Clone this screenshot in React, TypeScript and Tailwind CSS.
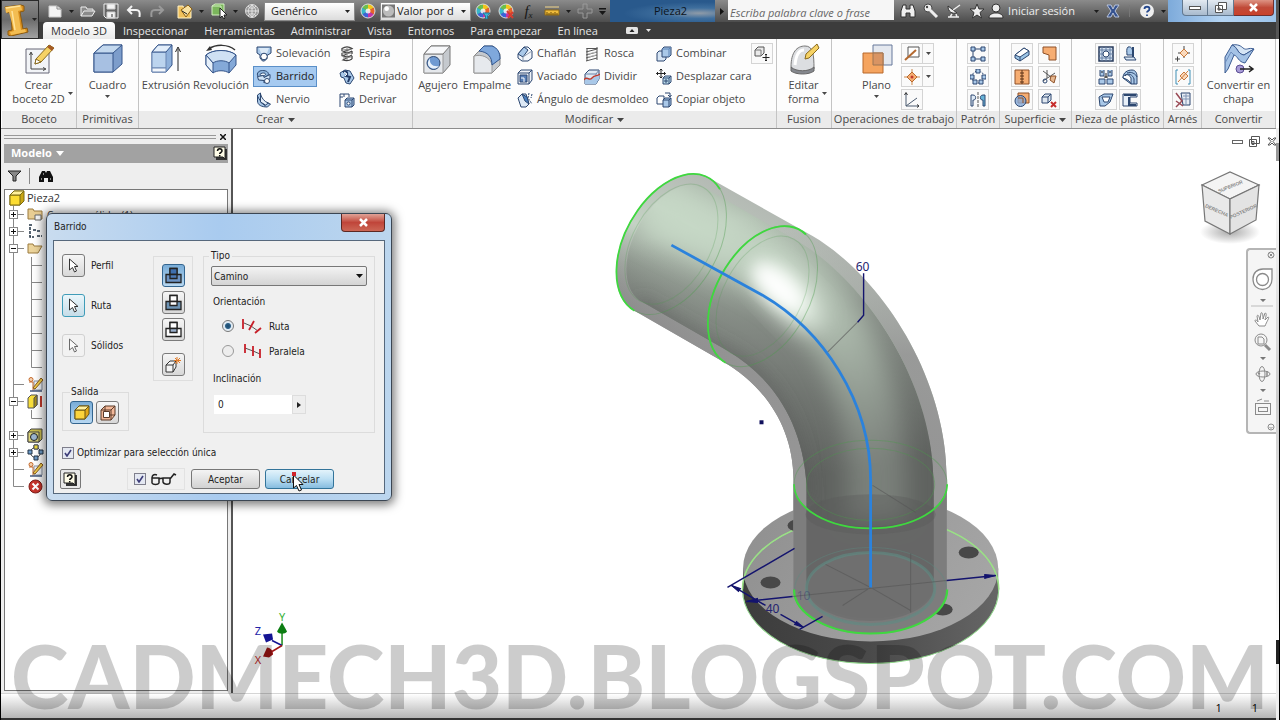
import type { ReactNode } from "react";

const O = "#f6ad72";
const B = "#a9c8e8";
const N = "#2c4770";

function Svg({ size = 16, box = 16, children, className = "" }: { size?: number; box?: number; children: ReactNode; className?: string }) {
  return (
    <svg width={size} height={size} viewBox={`0 0 ${box} ${box}`} fill="none" stroke={N} strokeWidth={1} className={`shrink-0 ${className}`} aria-hidden="true">
      {children}
    </svg>
  );
}

const icons: Record<string, ReactNode> = {
  solevacion: (<><path d="M1 1h14v6l-4 2.500v3L8.500 15h-2L4 12V9L1 7z" fill={B} /><path d="M3 2h10l-2 5H5z" fill="#dbe9f7" stroke="none" /><circle cx="8" cy="10.500" r="3.300" fill="#fff" /></>),
  barrido: (<><path d="M2 7.500C0 4 3 1.500 6.500 1.500c4 0 7 2 5.500 5l-4 2" fill="#8fb6de" /><path d="M4 5.500c1-2 6-2 5.500 0-.5 1.500-5 2-5.500 0z" fill="#eef5fc" /><path d="M1.500 7.500l6-1 .5 2 6-3v4l-6 4.500v-2.500l-5.500-.5z" fill="#cfe2f5" /><circle cx="11" cy="12" r="2.500" fill="#fff" /></>),
  nervio: (<><path d="M1.500 3l3-2v8c1 2 4 3 7 2l3 1-3 3c-6 0-10-2-10-6z" fill={B} /><path d="M4.500 1v9l5 4M1.500 4c2 4 4 7 8 9" fill="none" /><path d="M4.500 2c1 4 4 8 8 9l-3 2-5-3z" fill="#e6f0fa" /></>),
  espira: (<><path d="M3 2.500c3-2 7-2 10 0L4 6c3 1 6 1 9-1L4 10c3 1 6 1 9-1L4 14c3 1 6 1 9-1M3 2v3M13 5v3M3 7v3M13 10v3" stroke="#444" strokeWidth="1.300" /><path d="M4 4l8-1M4 8l8-1M4 12l8-1M8 2v12" stroke="#888" /></>),
  repujado: (<><path d="M1 4l5-3 5 1 4 7-4 6-4-1-2-5-3-1z" fill={B} /><path d="M4 3c5-2 5 2 3 4l4 1-2 5" fill="none" stroke="#223a66" strokeWidth="2" /><path d="M5 3l3 2-2 2" stroke="#fff" /></>),
  derivar: (<><path d="M1 15V2h9v3M5 2v3M1 5h3" /><path d="M6 8l2-2h7v7l-2 2H6z" fill={B} /><path d="M6 8h7v7M13 8l2-2" /><circle cx="9.500" cy="11.500" r="1.600" fill="#fff" /></>),
  chaflan: (<><path d="M1 8l6-7h4l4 4v7l-4 3H5L1 12z" fill="#f3f6fa" /><path d="M1 8l6-7 4 3-5 7z" fill={B} /><path d="M6 11l9-6M6 11v4" stroke="#8c9bb0" /></>),
  vaciado: (<><path d="M1 4l3-3h11v10l-3 4H1z" fill="#eef2f7" /><path d="M1 4h11v11M12 4l3-3" /><path d="M3 6h7v7H3z" fill="#587fb6" /><path d="M4 9h3v4" stroke="#fff" /></>),
  angulo: (<><path d="M1 6l4-4h4l3 10-3 3H4z" fill="#dce8f5" /><path d="M5 2l5 3 2 7-4-3z" fill="#4a80c0" /><path d="M12 1l-1 5 4 6M15 2l-1 4" strokeDasharray="2 1" /></>),
  rosca: (<><path d="M2.500 2.500h11M2 6l11-3M2 9l11-3M2 12l11-3M2 15l11-3M3 2v13M13 1v13" stroke="#555" /><path d="M4 8l8-2M4 11l8-2" stroke="#bbb" /></>),
  dividir: (<><path d="M1 5l4-4h10v9l-3 5H1z" fill="#dfe9f4" /><path d="M1 5h11v10M12 5l3-4" stroke="#6d86ab" /><path d="M1 10c3-4 5 2 8-1s4-1 6-4v5l-3 5H1z" fill={B} stroke="none" /><path d="M0 11c3-5 5 2 8-2s5-1 8-4" stroke="#c0392b" strokeWidth="1.300" /></>),
  combinar: (<><path d="M1 7l2-2h7v8l-2 2H1z" fill="#d7e5f4" /><path d="M6 3l2-2h7v8l-2 2H6z" fill={B} /><path d="M6 3h7v8M13 3l2-2" stroke="#5c83b5" /></>),
  desplazar: (<><path d="M5 0v9M0.500 4.500h9M3.500 1.500L5 0l1.500 1.500M3.500 7.500L5 9l1.500-1.500M2 3L.5 4.500 2 6M8 3l1.500 1.500L8 6" stroke="#222" /><path d="M7 9l2-2h6v6l-2 2H7z" fill="#bfe0ee" /><path d="M7 9h6v6M13 9l2-2M9 11h2v2H9z" /></>),
  copiar: (<><path d="M1 6l2-2h5v8H1z" fill="#fff" /><path d="M7 8l2-2h6v7l-2 2H7z" fill={B} /><path d="M7 8h6v7M13 8l2-2M9 1h5v3M12 3l2 2 1.500-2" /></>),
  reemplazar: (<><path d="M1 4l3-3h6v6l-3 3H1z" fill="#e9e9e9" stroke="#555" /><path d="M1 4h6v6" stroke="#777" /><path d="M12 8v7M8.500 11.500h7M11 9l1-1 1 1M11 14l1 1 1-1" stroke="#222" /></>),
  eje: (<><path d="M4 1h11v10H4z" stroke="#555" fill="#fff" /><path d="M1 14L12 4" stroke="#b46a31" strokeWidth="2" /></>),
  punto: (<><path d="M8 0v16M0 8h16" stroke="#c9874e" /><path d="M8 3l5 5-5 5-5-5z" fill={O} stroke="#b86a2d" /><circle cx="8" cy="8" r="1.500" fill="#c0392b" stroke="none" /></>),
  scu: (<><path d="M2 1v13h13M2 14l11-8" stroke="#4d5c70" /><path d="M.5 3L2 .5 3.500 3M13 12.500l2 1.500-2 1.500" stroke="#333" /></>),
  rect: (<><path d="M3 3h10M3 3v10M3 13h10" /><path d="M1 1h4v4H1zM11 1h4v4h-4zM1 11h4v4H1zM11 11h4v4h-4z" fill={B} /></>),
  circular: (<><circle cx="8" cy="8" r="6" strokeDasharray="2 1.500" /><path d="M6 0h4v4H6zM0 6h4v4H0zM12 6h4v4h-4zM9 11h4v4H9zM3 11h4v4H3z" fill={B} /></>),
  simetria: (<><path d="M8 0v16" stroke="#555" strokeDasharray="3 1" /><path d="M1 3h2c4 0 3 6 0 5v6H1z" fill="#dfeaf5" /><path d="M15 3h-2c-4 0-3 6 0 5v6h2z" fill="#67b3d7" /></>),
  engrosar: (<><path d="M1 9l9-7 5 3v4l-9 6-5-3z" fill="#9cc5e6" /><path d="M1 9l9-7 5 3-9 6z" fill="#fff" /><path d="M6 11v4" /></>),
  parche: (<path d="M2 1h13v13h-7V9L2 7z" fill={O} stroke="#8e5128" />),
  coser: (<><path d="M1 1h14v14H1z" fill={O} stroke="#8e5128" /><path d="M8 1v14M6 4h4M6 7h4M6 10h4M6 13h4" stroke="#5c3317" /></>),
  recortar: (<><path d="M2 2l12 9M2 12L14 4M6 1v8" stroke="#555" /><path d="M10 7h5l-2 7-4-3z" fill="#e6b78f" stroke="#8e5128" /><circle cx="4" cy="12" r="2" /></>),
  esculpir: (<><path d="M4 1h11v10H4z" fill={O} stroke="#8e5128" /><circle cx="6.500" cy="9" r="5.500" fill="#84a9d8" fillOpacity=".8" /><path d="M4 6h5v5" stroke="#8e5128" /></>),
  borrar: (<><path d="M1 5l3-3h6v6l-3 3H1z" fill="#dfe7f0" /><path d="M1 5h6v6M7 5l3-3" /><path d="M10 10l5 5M15 10l-5 5" stroke="#c62d2d" strokeWidth="2" /></>),
  rejilla: (<><path d="M1 1h14v14H1z" fill="#d5e2f1" stroke="#26395a" strokeWidth="1.500" /><path d="M1 4h14M1 12h14M4 1v14M12 1v14M1 8h14M8 1v14" stroke="#6780a5" /><circle cx="8" cy="8" r="3" fill="#fff" /></>),
  resalte: (<><path d="M6 1c4-1 5 3 5 8H5C5 6 4 3 6 1z" fill={B} /><path d="M2 11h10l2 3H4z" fill="#dbe8f5" /><path d="M11 1v10" strokeWidth="2" /></>),
  reborde: (<><path d="M2 1v6h4V1M10 1v6h4V1M1 10h6v5H1zM9 10h6v5H9z" fill={B} /><path d="M3 3h2M11 3h2M6 8h4M8 4v5" stroke="#222" /></>),
  apoyo: (<><path d="M1 9c0-6 5-8 9-8s5 4 5 6v8H9z" fill={B} /><path d="M1 9c0-4 6-5 8 0v6c-1-3-4-5-8-6z" fill="#fff" /><path d="M3 7c3-4 8-1 9 3v5M5 4c4-2 9 1 10 4" /></>),
  ajuste: (<><path d="M1 5l5-3h9l-3 8-5 4H2z" fill={B} /><path d="M4 5h8l-2 5H6z" fill="#fff" /></>),
  labio: (<><path d="M1 2h14v3H8v6h7v3H1z" fill="#e8f0f9" /><path d="M2 3h12M14 13H7V5" strokeWidth="2" /></>),
  arnes1: (<><path d="M3 7h12M9 0v12M0 13h5M2.500 10.500v5" stroke="#444" /><path d="M9 3l4 4-4 4-4-4z" fill="#fad9bc" stroke="#c97a3c" /></>),
  arnes2: (<><path d="M3 1H1v14h2M13 1h2v14h-2" stroke="#3f8fb5" /><path d="M9 3l4 4-4 4-4-4zM3 13L13 2" fill="#fad9bc" stroke="#c97a3c" /></>),
  arnes3: (<><path d="M6 1h9v12H8z" fill="#e8edf4" /><path d="M8 4h6M8 7h6M11 2v10" stroke="#8195b5" /><path d="M1 1l6 8-6 6M1 9l7 5" stroke="#9a4a55" strokeWidth="1.500" /></>),
};

const bigIcons: Record<string, ReactNode> = {
  boceto: (<><path d="M3 6h23v24H3z" fill="#f2f4f7" stroke="#667" /><path d="M8 10v16h14M6.500 12L8 9l1.500 3M20 24.500l3 1.500-3 1.500" stroke="#444" /><path d="M12 21l1-5L26 2l5 3-13 14z" fill="#f6d265" stroke="#8a6a1c" /><path d="M12 21l1-5 5 3z" fill="#fff" stroke="#8a6a1c" /><path d="M24 4l5 4 2-3-4-3z" fill="#a65b25" stroke="none" /></>),
  cuadro: (<><path d="M2 10l9-8h19v19l-9 8H2z" fill="#7d9dcb" stroke="#35558a" /><path d="M2 10h19v19H2z" fill="#a7c0e2" stroke="#35558a" /><path d="M2 10l9-8h19l-9 8z" fill="#c3d8ee" stroke="#35558a" /></>),
  extrusion: (<><path d="M2 9l6-7h14v20l-6 7H2z" fill="#8eb0da" stroke="#35558a" /><path d="M2 9h14v16H2z" fill="#bcd4ee" stroke="#6a86b3" /><path d="M2 25h14v4H2z" fill="#f2f6fb" stroke="#6a86b3" /><path d="M2 9l6-7h14l-6 7z" fill="#e3eefa" stroke="#35558a" /><path d="M28 28V6M25.500 9L28 4l2.500 5" stroke="#222" /></>),
  revolucion: (<><path d="M1 12c7-6 23-6 30 0v10l-7 8c-4-3-12-3-16 0l-7-8z" fill="#84a9d8" stroke="#35558a" /><path d="M1 12c7-6 23-6 30 0l-7 8c-4-3-12-3-16 0z" fill="#cfe1f4" stroke="#35558a" /><path d="M1 12l7 8v10l-7-8z" fill="#e6f0fa" stroke="#35558a" /><path d="M24 20v10" stroke="#35558a" /><path d="M4 6c7-5 19-5 26 1" stroke="#333" strokeWidth="1.500" /><path d="M1 8l4-5 2 4z" fill="#333" stroke="none" /></>),
  agujero: (<><path d="M2 11l7-8h19v19l-7 8H2z" fill="#c5c9ce" stroke="#777" /><path d="M2 11h19v19H2z" fill="#e5e8ec" stroke="#999" /><path d="M2 11l7-8h19l-7 8z" fill="#f7f8fa" stroke="#777" /><circle cx="11.500" cy="20" r="6.500" fill="#6f9ad2" stroke="#2c4770" /><path d="M8 15c-1 6 3 9 9 8-4 5-12 2-11-4z" fill="#e9f2fb" stroke="none" /></>),
  empalme: (<><path d="M3 13L13 3h9l7 8v11l-8 8H3z" fill="#c4c8cd" stroke="#888" /><path d="M3 13c8-2 15 1 18 8v9H3z" fill="#e6e9ed" stroke="#999" /><path d="M13 3h8c6 2 8 7 8 13l-8 6c0-8-4-13-13-14z" fill="#7fa8dc" stroke="#2f558e" /></>),
  forma: (<><path d="M3 24C3 9 9 3 17 3s9 8 9 23c-6 5-18 5-23-2z" fill="#dcdee1" stroke="#777" /><path d="M7 22C8 11 11 7 16 7" stroke="#fff" strokeWidth="3" /><path d="M3 24c5 5 18 5 23 0v4c-5 4-18 4-23 0z" fill="#85888e" stroke="#666" /><path d="M17 16l1-5L29 1l2 4-10 10z" fill="#f6d265" stroke="#8a6a1c" /></>),
  plano: (<><path d="M12 2h19v20H12z" fill="#e4e8ef" stroke="#66799b" /><path d="M2 10h20v20H2z" fill="#f5a45f" stroke="#b8692d" /><path d="M12 10h10v12H12z" fill="#d99463" stroke="#9c7455" /></>),
  chapa: (<><path d="M9 2c6 2 5 9 12 10l10-6c-6-2-7 2-11-1-2-2-5-4-11-3z" fill="#d6e5f5" stroke="#3c5c92" /><path d="M9 2c6 2 5 9 12 10l10-6-9 14c-7-1-7-7-11-8L5 26l-3 4V14z" fill="#a5c3e6" stroke="#3c5c92" /><path d="M11 12L8 9 2 20" stroke="#6d8dbd" /><circle cx="17" cy="26" r="4" fill="#a79bd6" stroke="#5b4e94" /><path d="M17 26h12M26 23l4 3-4 3" stroke="#222" strokeWidth="1.500" /></>),
};

function Down({ className = "" }: { className?: string }) {
  return (
    <svg width="5" height="3" viewBox="0 0 5 3" className={`shrink-0 ${className}`} aria-hidden="true"><path d="M0 0h5L2.500 3z" fill="currentColor" /></svg>
  );
}

function Big({ icon, lines, caret, side, className }: { icon: string; lines: string[]; caret?: boolean; side?: boolean; className: string }) {
  return (
    <button type="button" className={`flex shrink-0 flex-col items-center leading-[14px] whitespace-nowrap ${className}`}>
      <Svg size={32} box={32} className="mb-[3px]">{bigIcons[icon]}</Svg>
      <span>{lines[0]}</span>
      {lines[1] && (
        <span className="relative">
          {lines[1]}
          {side && <Down className="absolute top-0 -right-2" />}
        </span>
      )}
      {caret && <Down className="mt-[3px]" />}
    </button>
  );
}

function Tool({ icon, label, active, className = "" }: { icon: string; label: string; active?: boolean; className?: string }) {
  return (
    <button type="button" className={`flex h-[21px] items-center gap-1 justify-self-start border px-0.5 whitespace-nowrap ${active ? "border-[#5a8fc8] bg-[#a6caf0] text-[#222]" : "border-transparent"} ${className}`}>
      <Svg>{icons[icon]}</Svg>
      {label}
    </button>
  );
}

function Mini({ icon, caret, title }: { icon: string; caret?: boolean; title: string }) {
  return (
    <button type="button" aria-label={title} className="flex h-[21px] items-center border border-[#d4d4d4] bg-[#fafafa]">
      <span className="grid w-5 place-items-center"><Svg>{icons[icon]}</Svg></span>
      {caret && <span className="grid h-full w-[11px] place-items-center border-l border-[#d4d4d4]"><Down /></span>}
    </button>
  );
}

function Panel({ title, caret, className, children }: { title: string; caret?: boolean; className: string; children: ReactNode }) {
  return (
    <section className={`flex shrink-0 flex-col border-r border-[#c4c4c4] ${className}`}>
      <div className="flex h-[72px] items-start pt-1">{children}</div>
      <h2 className="flex h-[17px] items-center justify-center gap-1 bg-[#ebebeb] whitespace-nowrap">
        {title}
        {caret && <svg width="7" height="4" viewBox="0 0 7 4" aria-hidden="true"><path d="M0 0h7L3.500 4z" fill="#444" /></svg>}
      </h2>
    </section>
  );
}

function Qat({ label, children }: { label: string; children: ReactNode }) {
  return (
    <button type="button" aria-label={label} className="grid h-[22px] w-[23px] shrink-0 place-items-center">
      <Svg>{children}</Svg>
    </button>
  );
}

function BarCaret({ className = "w-2.5" }: { className?: string }) {
  return <span className={`grid shrink-0 place-items-center text-[#1c1c1c] ${className}`}><Down /></span>;
}

function Wheel() {
  return (
    <g stroke="none">
      <path d="M8 8V1a7 7 0 0 1 6 3.500z" fill="#f3c51d" /><path d="M8 8l6-3.500a7 7 0 0 1 0 7z" fill="#e8632b" />
      <path d="M8 8l6 3.500A7 7 0 0 1 8 15z" fill="#c234a8" /><path d="M8 8v7a7 7 0 0 1-6-3.500z" fill="#3b62d8" />
      <path d="M8 8l-6 3.500a7 7 0 0 1 0-7z" fill="#38b6c9" /><path d="M8 8L2 4.500A7 7 0 0 1 8 1z" fill="#6cc04a" />
      <circle cx="8" cy="8" r="2.500" fill="#fff" fillOpacity=".8" /><circle cx="8" cy="8" r="7" fill="none" stroke="#ddd" />
    </g>
  );
}

function BarSelect({ label, value, swatch }: { label: string; value: string; swatch?: boolean }) {
  return (
    <div className="relative h-[19px] w-[91px] shrink-0 border border-[#8a8a8a] bg-gradient-to-b from-white to-[#dcdcdc] text-[#222]">
      <select aria-label={label} className={`h-full w-full appearance-none outline-none ${swatch ? "pl-4" : "pl-1.5"}`}>
        <option>{value}</option>
      </select>
      {swatch && (
        <svg width="13" height="14" viewBox="0 0 14 14" className="pointer-events-none absolute top-px left-px" aria-hidden="true">
          <rect width="14" height="14" fill="#777" /><circle cx="7" cy="7" r="6" fill="#bbb" /><circle cx="5" cy="4.500" r="2.500" fill="#fff" />
        </svg>
      )}
      <Down className="pointer-events-none absolute top-[7px] right-1" />
    </div>
  );
}

function TitleBar() {
  return (
    <div className="flex h-[22px] items-center bg-gradient-to-b from-[#8b8b8b] to-[#4d4d4d] pl-1">
      <Qat label="Nuevo"><path d="M2 3h8l4 3v8H2z" fill="#f4f4f4" stroke="#ccc" /><path d="M10 3v3h4" stroke="#888" /></Qat>
      <BarCaret />
      <Qat label="Abrir"><path d="M1 13V4h5l1 2h6v2M1 13l3-5h11l-3 5z" fill="#8a8a8a" stroke="#eee" /></Qat>
      <Qat label="Guardar"><path d="M1 1h14v14H3l-2-2z" fill="#666" stroke="#eee" /><path d="M4 1h8v5H4zM4 9h8v6H4z" fill="#f2f2f2" stroke="#ccc" /><path d="M9 11v3" stroke="#333" /></Qat>
      <Qat label="Deshacer"><path d="M6 3L2 7l4 4M2.500 7H10c4 0 4 3 3.500 7" stroke="#f2f2f2" strokeWidth="2" /></Qat>
      <Qat label="Rehacer"><path d="M10 3l4 4-4 4M13.500 7H6c-4 0-4 3-3.500 7" stroke="#999" strokeWidth="2" /></Qat>
      <span className="w-[5px] shrink-0" />
      <Qat label="Proyectos"><path d="M1 3h5l1 2h7v10H1z" fill="#f0c15c" stroke="#fff1c5" /><path d="M4 7l7-5 4 4-6 8z" fill="#f8e1a1" stroke="#8b5e12" /><path d="M5 8l5 3" stroke="#222" /></Qat>
      <BarCaret className="w-[11px]" />
      <Qat label="Seleccionar"><path d="M1 3h9v9H1zM1 3l3-2h9v9l-3 2" fill="#7bb65c" stroke="#d4f0c2" /><path d="M9 5v10l2-2 2 3 1-1-1-3h3z" fill="#fff" stroke="#222" /></Qat>
      <BarCaret />
      <Qat label="Material"><circle cx="8" cy="8" r="6.500" fill="#999" stroke="#ddd" /><path d="M2 8h12M8 2v12M4 3c2 3 6 3 8 0M4 13c2-3 6-3 8 0M8 2c-5 4-5 8 0 12M8 2c5 4 5 8 0 12" stroke="#e2e2e2" /></Qat>
      <span className="w-px shrink-0" />
      <BarSelect label="Material" value="Genérico" />
      <span className="w-px shrink-0" />
      <Qat label="Aspecto"><Wheel /></Qat>
      <span className="w-px shrink-0" />
      <BarSelect label="Aspecto" value="Valor por d" swatch />
      <Qat label="Ajustar"><Wheel /><path d="M8 10h7l-2.500 3v3h-2v-3z" fill="#3fb5d6" stroke="#1d7c99" /></Qat>
      <Qat label="Borrar aspecto"><Wheel /><path d="M9 8l6 7M15 9l-5 6" stroke="#d63c2e" strokeWidth="2" /></Qat>
      <button type="button" aria-label="Parámetros" className="h-[22px] w-[23px] shrink-0 font-['Liberation_Serif',serif] text-[15px] leading-none italic text-[#161616]">f<sub className="text-[9px]">x</sub></button>
      <Qat label="Medir"><path d="M1 7h14v5H1z" fill="#f0bd3c" stroke="#8f6814" /><path d="M3 9v3M5 10v2M7 9v3M9 10v2M11 9v3M13 10v2" stroke="#6e4c06" /><path d="M1 4h14" stroke="#f3d88f" /></Qat>
      <BarCaret />
      <Qat label="Añadir"><path d="M6 1h4v5h5v4h-5v5H6v-5H1V6h5z" stroke="#999" /></Qat>
      <span className="grid w-3 shrink-0 place-items-center"><svg width="7" height="7" viewBox="0 0 7 7" aria-hidden="true"><path d="M0 0h7v1.500H0zM0 3h7L3.500 7z" fill="#161616" /></svg></span>
      <div className="ml-0.5 grid h-[22px] w-[105px] shrink-0 place-items-center bg-[radial-gradient(ellipse_at_85%_60%,#8f9ba8_0%,#3f6f9e_28%,#29598c_60%)] pl-4 text-[#0c1420]">Pieza2</div>
      <span className="grid w-[13px] shrink-0 place-items-center"><svg width="4" height="7" viewBox="0 0 4 7" aria-hidden="true"><path d="M0 0l4 3.500L0 7z" fill="#111" /></svg></span>
      <input aria-label="Buscar" placeholder="Escriba palabra clave o frase" className="h-5 min-w-0 flex-1 self-start bg-[#f6f6f6] px-0.5 pt-1 text-[11px] italic outline-none placeholder:text-[#666]" />
      <div className="flex shrink-0 items-center pl-0.5 text-[#eee]">
        <Qat label="Buscar ahora"><path d="M3 2h3v4h4V2h3l2 6v6h-5v-4H6v4H1V8z" fill="#efefef" stroke="#333" /></Qat>
        <Qat label="Suscripción"><circle cx="5" cy="5" r="4" fill="#eee" stroke="#444" /><path d="M7 7l7 7" stroke="#eee" strokeWidth="3" /><circle cx="4" cy="4" r="1.200" fill="#444" stroke="none" /></Qat>
        <Qat label="Comunicación"><path d="M2 3c0 6 4 8 9 7z" fill="#eee" stroke="#333" /><path d="M7 7l7-5M2 14h11M6 11l-2 3h7l-1-3" stroke="#eee" strokeWidth="1.500" /></Qat>
        <Qat label="Favoritos"><path d="M8 1l2 5h5l-4 3.500 1.500 5.500L8 12l-4.500 3L5 9.500 1 6h5z" fill="#eee" stroke="#333" /></Qat>
        <button type="button" className="flex h-[22px] items-center gap-1 whitespace-nowrap">
          <Svg><circle cx="8" cy="5" r="4" fill="#eee" stroke="#333" /><path d="M1 15c0-4 3-4 5-5h4c2 1 5 1 5 5z" fill="#eee" stroke="#333" /></Svg>
          Iniciar sesión
        </button>
        <span className="w-4 shrink-0" />
        <BarCaret />
        <Qat label="Exchange"><path d="M2 2h4l2 4 2-4h4l-4 6 4 6h-4L8 10l-2 4H2l4-6z" fill="#35528f" stroke="#b8c4dd" /></Qat>
        <span className="mx-[5px] h-3 w-px bg-[#777]" />
        <Qat label="Ayuda"><circle cx="8" cy="8" r="7" fill="#eee" stroke="none" /><path d="M5.500 6c0-3 5-3 5 0 0 2-2.500 2-2.500 3.500M8 11.500v1.500" stroke="#24478c" strokeWidth="1.800" /></Qat>
        <BarCaret />
      </div>
      <div className="flex h-full w-[108px] shrink-0 items-start justify-end bg-gradient-to-r from-[#7daada] via-[#b4d4f3] to-[#9cc3ea] pr-0.5 text-[#444]">
        <button type="button" aria-label="Minimizar" className="grid h-4 w-[26px] place-items-center rounded-bl border border-t-0 border-[#62788f] bg-gradient-to-b from-[#e3eaf2] to-[#a8bacd]"><span className="h-1 w-3 border border-[#555] bg-white" /></button>
        <button type="button" aria-label="Restaurar" className="grid h-4 w-[26px] place-items-center border border-t-0 border-l-0 border-[#62788f] bg-gradient-to-b from-[#e3eaf2] to-[#a8bacd]"><svg width="12" height="11" viewBox="0 0 12 11" fill="#fff" stroke="#555" aria-hidden="true"><path d="M3.500.5h8v7h-8zM.5 3.500h7v7h-7zM3 6h2v2H3z" /></svg></button>
        <button type="button" aria-label="Cerrar" className="grid h-4 w-10 place-items-center rounded-br border border-t-0 border-l-0 border-[#6d3030] bg-gradient-to-b from-[#dd9384] via-[#c04a39] to-[#c9412a]"><svg width="11" height="9" viewBox="0 0 11 9" stroke="#fff" strokeWidth="2.500" aria-hidden="true"><path d="M2 1l7 7M9 1L2 8" /></svg></button>
      </div>
    </div>
  );
}

function Header() {
  const tabs = ["Inspeccionar", "Herramientas", "Administrar", "Vista", "Entornos", "Para empezar", "En línea"];
  return (
    <header className="flex h-[39px]">
      <button type="button" aria-label="Menú de aplicación" className="flex w-[38px] shrink-0 items-center border border-[#2b2b2b] bg-gradient-to-b from-[#8a8a8a] via-[#6b6b6b] to-[#a2a2a2] pl-0.5">
        <svg width="26" height="32" viewBox="0 0 26 32" aria-hidden="true">
          <path d="M1 3l16-2 3 1v5l-4 1 3 17 4-1 1 4-17 4-3-1v-4l4-1L7 8 3 9z" fill="#d98f1e" stroke="#8a5a10" />
          <path d="M1 3l16-2 1 5-4 1 3 19 4-1 1 3-15 3-1-3 4-1L5 8 2 9z" fill="#f3bd52" />
          <path d="M2 4l14-2M8 7l3 19" stroke="#ffe39a" strokeWidth="1.500" />
        </svg>
        <Down className="ml-0.5 text-[#222]" />
      </button>
      <div className="min-w-0 flex-1">
        <TitleBar />
        <nav className="flex h-[17px] items-center bg-[#3c3c3c] pl-1 text-[#e6e6e6]">
          <button type="button" className="h-[17px] rounded-t-sm bg-gradient-to-b from-white to-[#eaeaea] px-2 leading-[17px] whitespace-nowrap text-[#333]">Modelo 3D</button>
          {tabs.map((t) => <button key={t} type="button" className="px-2 leading-[17px] whitespace-nowrap">{t}</button>)}
          <button type="button" aria-label="Minimizar cinta" className="ml-5 flex items-center gap-2">
            <svg width="12" height="7" viewBox="0 0 12 7" aria-hidden="true"><rect width="12" height="7" rx="1.500" fill="#e4e4e4" /><path d="M6 2l2.500 3h-5z" fill="#222" /></svg>
            <Down />
          </button>
        </nav>
      </div>
    </header>
  );
}

function Ribbon() {
  return (
    <div className="flex h-[90px] overflow-hidden border-b border-[#8c8c8c] bg-[#fdfdfd] pl-px text-[#484848]">
      <Panel title="Boceto" className="w-[75px]"><Big icon="boceto" lines={["Crear", "boceto 2D"]} side className="w-[73px]" /></Panel>
      <Panel title="Primitivas" className="w-[62px]"><Big icon="cuadro" lines={["Cuadro"]} caret className="w-[61px]" /></Panel>
      <Panel title="Crear" caret className="w-[274px]">
        <Big icon="extrusion" lines={["Extrusión"]} className="w-[54px]" />
        <Big icon="revolucion" lines={["Revolución"]} className="w-14" />
        <div className="ml-1 grid w-[83px] shrink-0 gap-0.5">
          <Tool icon="solevacion" label="Solevación" />
          <Tool icon="barrido" label="Barrido" active />
          <Tool icon="nervio" label="Nervio" />
        </div>
        <div className="grid gap-0.5">
          <Tool icon="espira" label="Espira" />
          <Tool icon="repujado" label="Repujado" />
          <Tool icon="derivar" label="Derivar" />
        </div>
      </Panel>
      <Panel title="Modificar" caret className="w-[364px]">
        <Big icon="agujero" lines={["Agujero"]} className="w-[50px]" />
        <Big icon="empalme" lines={["Empalme"]} className="w-12" />
        <div className="ml-[3px] grid w-[139px] shrink-0 grid-cols-[67px_auto] gap-y-0.5">
          <Tool icon="chaflan" label="Chaflán" />
          <Tool icon="rosca" label="Rosca" />
          <Tool icon="vaciado" label="Vaciado" />
          <Tool icon="dividir" label="Dividir" />
          <Tool icon="angulo" label="Ángulo de desmoldeo" className="col-span-2" />
        </div>
        <div className="grid w-[98px] gap-0.5">
          <Tool icon="combinar" label="Combinar" />
          <Tool icon="desplazar" label="Desplazar cara" />
          <Tool icon="copiar" label="Copiar objeto" />
        </div>
        <Mini icon="reemplazar" title="Reemplazar cara" />
      </Panel>
      <Panel title="Fusion" className="w-[55px]"><Big icon="forma" lines={["Editar", "forma"]} side className="w-[53px]" /></Panel>
      <Panel title="Operaciones de trabajo" className="w-[125px]">
        <Big icon="plano" lines={["Plano"]} caret className="w-[89px]" />
        <div className="-ml-5 grid gap-0.5">
          <Mini icon="eje" title="Eje" caret />
          <Mini icon="punto" title="Punto" caret />
          <span className="flex"><Mini icon="scu" title="SCU" /></span>
        </div>
      </Panel>
      <Panel title="Patrón" className="w-[43px]">
        <div className="mx-auto grid gap-0.5">
          <Mini icon="rect" title="Rectangular" /><Mini icon="circular" title="Circular" /><Mini icon="simetria" title="Simetría" />
        </div>
      </Panel>
      <Panel title="Superficie" caret className="w-[72px]">
        <div className="mx-auto grid grid-cols-2 gap-x-[5px] gap-y-0.5">
          <Mini icon="engrosar" title="Engrosar" /><Mini icon="parche" title="Parche" />
          <Mini icon="coser" title="Coser" /><Mini icon="recortar" title="Recortar" />
          <Mini icon="esculpir" title="Esculpir" /><Mini icon="borrar" title="Suprimir cara" />
        </div>
      </Panel>
      <Panel title="Pieza de plástico" className="w-[92px]">
        <div className="mx-auto grid grid-cols-2 gap-x-0.5 gap-y-0.5">
          <Mini icon="rejilla" title="Rejilla" /><Mini icon="resalte" title="Resalte" />
          <Mini icon="reborde" title="Ajuste rápido" /><Mini icon="apoyo" title="Apoyo" />
          <Mini icon="ajuste" title="Empalme de regla" /><Mini icon="labio" title="Labio" />
        </div>
      </Panel>
      <Panel title="Arnés" className="w-[38px]">
        <div className="mx-auto grid gap-0.5">
          <Mini icon="arnes1" title="Propiedades" /><Mini icon="arnes2" title="Colocar" /><Mini icon="arnes3" title="Tabla" />
        </div>
      </Panel>
      <Panel title="Convertir" className="min-w-[73px] flex-1"><Big icon="chapa" lines={["Convertir en", "chapa"]} className="w-full" /></Panel>
    </div>
  );
}

function Help() {
  return (
    <svg width="15" height="15" viewBox="0 0 15 15" aria-hidden="true">
      <path d="M3 3h11v11H3z" fill="#333" /><path d="M1 1h11v12l-2-2H1z" fill="#fffde8" stroke="#222" />
      <path d="M4.500 5c0-3 4.500-3 4.500 0 0 1.500-2.300 1.500-2.300 3M6.700 9v1.500" fill="none" stroke="#111" strokeWidth="1.500" />
    </svg>
  );
}

const treeIcons: Record<string, ReactNode> = {
  solids: (<><path d="M27 3h5l1 2h8v8H27z" fill="#e8cd93" stroke="#9b7b3f" /><path d="M34 9h6v5h-6z" fill="#f7f7f7" stroke="#666" /></>),
  view: (<path d="M28 2h3M29 4v10h4M32 7h3M36 13h5M36 8h4" stroke="#234" strokeWidth="1.500" strokeDasharray="3 1" fill="none" />),
  folder: (<path d="M27 13V4h5l1 2h8l-4 7z" fill="#ecd49b" stroke="#9b7b3f" />),
  sketch: (<><path d="M33 5h8v9h-8z" fill="#eef2f8" stroke="#8a93a3" /><circle cx="30" cy="3.500" r="2" fill="#f3d3b4" stroke="#c56a2c" /><path d="M28 6h4v9" stroke="#c56a2c" fill="none" /><path d="M32 12l8-10 2 2-8 9z" fill="#f2cf4a" stroke="#8a5a1c" /><path d="M29 15h12" stroke="#44597e" strokeWidth="1.500" /></>),
  extrude: (<><path d="M27 5l3-3h6v10l-3 3h-6z" fill="#f8de3a" stroke="#555" /><path d="M33 5l3-3v10l-3 3z" fill="#a38d19" stroke="#555" /><path d="M40 14V3" stroke="#c0392b" strokeWidth="2" /></>),
  hole: (<><path d="M27 5l3-3h11v10l-3 3H27z" fill="#c9bd4e" stroke="#444" /><path d="M27 5h11v10H27z" fill="#ded579" stroke="#444" /><circle cx="33" cy="10" r="3.500" fill="#9bb4cf" stroke="#222" /></>),
  pattern: (<><circle cx="34.500" cy="8.500" r="5" fill="none" stroke="#555" /><path d="M33 1h4v4h-4zM27 6h4v4h-4zM38 6h4v4h-4zM33 12h4v4h-4z" fill="#6f9dc9" stroke="#234" /><path d="M33 1h4v4h-4z" fill="#f2dc3c" stroke="#555" /></>),
  end: (<><circle cx="34.500" cy="8.500" r="6.500" fill="#c7342b" stroke="#7b1a15" /><path d="M31.500 5.500l6 6M37.500 5.500l-6 6" stroke="#fff" strokeWidth="2" /></>),
};

function Row({ box, icon, kids, last }: { box?: "+" | "-"; icon?: string; kids?: "mid" | "end"; last?: boolean }) {
  return (
    <svg width="46" height="17" viewBox="0 0 46 17" stroke="#888" className="block" aria-hidden="true">
      <path d={last ? "M8.500 0v8.500H19" : "M8.500 0v17"} fill="none" />
      {icon && <path d="M9 8.500h10" />}
      {kids && <path d={kids === "mid" ? "M26.500 0v17M26.500 8.500H37" : "M26.500 0v8.500H37"} fill="none" />}
      {box && <><rect x="4.500" y="4.500" width="8" height="8" fill="#fff" /><path d="M6 8.500h5" stroke="#111" />{box === "+" && <path d="M8.500 6v5" stroke="#111" />}</>}
      {icon && <g transform="translate(-4 0)">{treeIcons[icon]}</g>}
    </svg>
  );
}

function Browser() {
  return (
    <aside className="flex w-[232px] shrink-0 flex-col border-r-2 border-[#555] bg-[#eee] pr-[3px] pb-0.5 pl-[3px]">
      <div className="flex h-[15px] items-center gap-1">
        <span className="h-[4px] flex-1 border-y border-[#999]" />
        <button type="button" aria-label="Cerrar navegador" className="pr-0.5"><svg width="6" height="6" viewBox="0 0 6 6" stroke="#111" strokeWidth="1.500" aria-hidden="true"><path d="M0 0l6 6M6 0L0 6" /></svg></button>
      </div>
      <div className="flex h-[19px] items-center justify-between bg-[#a2a2a2] pl-[7px]">
        <button type="button" className="flex items-center gap-1 font-['Noto_Sans',sans-serif] text-[11px] font-bold text-white">Modelo<svg width="8" height="5" viewBox="0 0 8 5" aria-hidden="true"><path d="M0 0h8L4 5z" fill="#fff" /></svg></button>
        <button type="button" aria-label="Ayuda del navegador"><Help /></button>
      </div>
      <div className="flex h-[26px] items-center gap-2 pl-1">
        <button type="button" aria-label="Filtro"><svg width="13" height="12" viewBox="0 0 13 12" aria-hidden="true"><path d="M0 1h13L8 6v5H5V6z" fill="#888" stroke="#222" /></svg></button>
        <span className="h-4 w-px bg-[#888]" />
        <button type="button" aria-label="Buscar en el modelo"><svg width="16" height="13" viewBox="0 0 16 13" aria-hidden="true"><path d="M4 1h3l1 2 1-2h3l3 6v5h-5V8H6v4H1V7z" fill="#111" /><path d="M3 9h1M12 9h1M5 4h1" stroke="#fff" /></svg></button>
      </div>
      <div className="flex-1 border border-[#777] bg-white">
        <div className="flex h-4 items-center gap-0.5 pl-1 text-[11px] text-[#333]">
          <svg width="16" height="16" viewBox="0 0 16 16" stroke="#7a6a10" aria-hidden="true"><path d="M1 5l4-4h10v10l-4 4H1z" fill="#c9a613" /><path d="M1 5h10v10H1z" fill="#fbdc32" /><path d="M1 5l4-4h10l-4 4z" fill="#fff19a" /></svg>
          Pieza2
        </div>
        <div className="flex items-center"><Row box="+" icon="solids" /><span className="-ml-1 text-[10px] leading-none text-[#333]">Cuerpos sólidos(1)</span></div>
        <Row box="+" icon="view" />
        <Row box="-" icon="folder" />
        <Row kids="mid" /><Row kids="mid" /><Row kids="mid" /><Row kids="mid" /><Row kids="mid" /><Row kids="mid" /><Row kids="end" />
        <Row icon="sketch" />
        <Row box="-" icon="extrude" />
        <Row kids="end" />
        <Row box="+" icon="hole" />
        <Row box="+" icon="pattern" />
        <Row icon="sketch" />
        <Row icon="end" last />
      </div>
    </aside>
  );
}

const OUTER = "M707.900 177.500L812 236C880 276 946 376 946 478V590A76.500 43 0 0 1 793 590V480C793 425 762 384 722 361L634.100 310.500A76 46.600 119 0 1 707.900 177.500z";
const INNER = "M703 187L800 243C864 282 933 380 933 484V588A64 34 0 0 1 806 588V484C802 420 770 376 728 351L639 300A65 39 119 0 1 703 187z";

function Model() {
  return (
    <svg viewBox="233 129 1042 564" preserveAspectRatio="xMidYMin slice" className="absolute inset-0 h-full w-full" role="img" aria-label="Vista previa del barrido">
      <defs>
        <linearGradient id="wall" x1="707" y1="178" x2="634" y2="310" gradientUnits="userSpaceOnUse">
          <stop offset="0" stopColor="#b4bab4" /><stop offset=".5" stopColor="#c4d2c4" /><stop offset="1" stopColor="#848484" />
        </linearGradient>
        <linearGradient id="wallfade" x1="0" y1="230" x2="0" y2="480" gradientUnits="userSpaceOnUse">
          <stop offset="0" stopColor="#979797" stopOpacity="0" /><stop offset=".5" stopColor="#949494" stopOpacity=".9" /><stop offset="1" stopColor="#969696" />
        </linearGradient>
        <linearGradient id="bore" x1="712" y1="190" x2="646" y2="308" gradientUnits="userSpaceOnUse">
          <stop offset="0" stopColor="#aebbae" /><stop offset=".3" stopColor="#c6d6c6" /><stop offset=".65" stopColor="#a1aca1" /><stop offset="1" stopColor="#6e726e" />
        </linearGradient>
        <linearGradient id="bend" x1="740" y1="220" x2="790" y2="480" gradientUnits="userSpaceOnUse">
          <stop offset="0" stopColor="#8a928a" stopOpacity="0" /><stop offset=".4" stopColor="#818781" stopOpacity=".9" /><stop offset="1" stopColor="#5f625f" />
        </linearGradient>
        <linearGradient id="glow" x1="740" y1="230" x2="830" y2="480" gradientUnits="userSpaceOnUse">
          <stop offset="0" stopColor="#c6d8c6" /><stop offset=".5" stopColor="#b0beb0" /><stop offset="1" stopColor="#7f857f" />
        </linearGradient>
        <linearGradient id="face" x1="742" y1="500" x2="997" y2="640" gradientUnits="userSpaceOnUse">
          <stop offset="0" stopColor="#8f8f8f" /><stop offset="1" stopColor="#a8a8a8" />
        </linearGradient>
        <linearGradient id="side" x1="742" y1="0" x2="997" y2="0" gradientUnits="userSpaceOnUse">
          <stop offset="0" stopColor="#3c3c3c" /><stop offset=".5" stopColor="#4a4a4a" /><stop offset="1" stopColor="#666" />
        </linearGradient>
        <filter id="b12" x="-50%" y="-50%" width="200%" height="200%"><feGaussianBlur stdDeviation="12" /></filter>
        <filter id="b8" x="-50%" y="-50%" width="200%" height="200%"><feGaussianBlur stdDeviation="8" /></filter>
        <clipPath id="bc"><path d={INNER} /></clipPath>
      </defs>
      <path d="M742.500 568V590A127.500 73 0 0 0 997.500 590V568z" fill="url(#side)" />
      <ellipse cx="870" cy="568" rx="127.500" ry="73" fill="url(#face)" />
      <ellipse cx="870" cy="589" rx="128" ry="74" fill="none" stroke="#8fd48a" strokeWidth="1" />
      <path d="M742 589A128 74 0 0 1 808 524M932 524A128 74 0 0 1 998 589" fill="none" stroke="#9be086" strokeWidth="1.500" />
      <g fill="#484848"><ellipse cx="797" cy="525" rx="10" ry="6" /><ellipse cx="968" cy="552" rx="10" ry="6" /><ellipse cx="770" cy="582" rx="10" ry="6" /><ellipse cx="942" cy="609" rx="10" ry="6" /></g>
      <path d={OUTER} fill="url(#wall)" />
      <path d={OUTER} fill="url(#wallfade)" />
      <path d={INNER} fill="url(#bore)" />
      <path d={INNER} fill="url(#bend)" />
      <g clipPath="url(#bc)">
        <path d="M650 205L775 268C842 308 876 395 876 480V520" fill="none" stroke="url(#glow)" strokeWidth="58" strokeOpacity=".85" filter="url(#b12)" />
        <path d="M637 303L728 354C770 378 800 425 804 500" fill="none" stroke="#555855" strokeWidth="14" strokeOpacity=".5" filter="url(#b8)" />
        <ellipse cx="788" cy="296" rx="44" ry="19" transform="rotate(46 788 296)" fill="#f0fbf0" fillOpacity=".85" filter="url(#b12)" />
        <ellipse cx="778" cy="287" rx="32" ry="13" transform="rotate(42 778 287)" fill="#fff" filter="url(#b8)" />
      </g>
      <path d="M793 484V590A76.500 43 0 0 0 946 590V484A76.500 44 0 0 1 793 484z" fill="#777" fillOpacity=".8" />
      <path d="M806 507V590A64 35 0 0 0 933 590V507A77 44 0 0 1 806 507z" fill="#636363" fillOpacity=".75" />
      <ellipse cx="870" cy="514" rx="65" ry="20" fill="#5a5a5a" fillOpacity=".35" />
      <ellipse cx="870" cy="588" rx="64" ry="36" fill="#777" fillOpacity=".5" stroke="#5d8c83" strokeOpacity=".6" strokeWidth="3" />
      <ellipse cx="870" cy="590" rx="76" ry="43" fill="none" stroke="#5d8c83" strokeOpacity=".4" />
      <g fill="none" stroke="#4c9a4c" strokeOpacity=".4">
        <ellipse cx="870" cy="484" rx="76.500" ry="44" /><ellipse cx="870" cy="484" rx="64" ry="36" />
        <ellipse cx="671" cy="244" rx="76" ry="46.600" transform="rotate(119 671 244)" /><ellipse cx="671" cy="244" rx="65" ry="39" transform="rotate(119 671 244)" strokeOpacity=".25" />
        <ellipse cx="762" cy="296" rx="76" ry="46.600" transform="rotate(119 762 296)" /><ellipse cx="762" cy="296" rx="65" ry="39" transform="rotate(119 762 296)" strokeOpacity=".25" />
      </g>
      <g fill="none" stroke="#3fd83f" strokeWidth="1.800">
        <path d="M634.100 310.500A76 46.600 119 1 1 719.500 189.200" />
        <path d="M725.100 362.500A76 46.600 119 1 1 805.400 234.400" />
        <path d="M793.500 484A76.500 44 0 0 0 946.500 484" />
        <path d="M793.500 589A76.500 44 0 0 0 946.500 589" strokeWidth="2.200" />
      </g>
      <g fill="none" stroke="#555" strokeOpacity=".6"><path d="M857 322L826 353M792 596L946 580M870 587L910 610M870 587L825 564M910 553V612M872 485L915 512M870 587L842 605" /></g>
      <path d="M671 245L762 295C822 330 870 400 870 480V587" fill="none" stroke="#2b82dc" strokeWidth="2.800" />
      <g fill="none" stroke="#14146e" strokeWidth="1.400">
        <path d="M863 273V315L857 322M727 587L794 548M731 585L765 605M780 614L803 627M799 629L822 616M746 601L792 596M946 580L995 575" />
        <path d="M731 585l9 3-2 3zM803 627l-9-3 2-3zM746 601l11-3v4zM995 575l-11-1v4z" fill="#14146e" strokeWidth="1" />
      </g>
      <rect x="759" y="420" width="4" height="4" fill="#10105c" />
      <g fontFamily="'Noto Sans', sans-serif" fontSize="12" fill="#23236f" textAnchor="middle"><text x="862" y="271">60</text><text x="772" y="613">40</text><text x="803" y="600" fillOpacity=".35">10</text></g>
      <g fontFamily="'Noto Sans', sans-serif" fontSize="11" textAnchor="middle">
        <path d="M282 645V630" stroke="#178a17" strokeWidth="1.500" /><path d="M282 622l5 9c-2 3-8 3-10 0z" fill="#0c7d12" />
        <path d="M282 645L272 640" stroke="#141493" strokeWidth="1.500" /><path d="M263 634l9-1 1 6-7 3z" fill="#141493" />
        <path d="M282 645L272 651" stroke="#a01515" strokeWidth="1.500" /><path d="M263 656l4-9c3 0 6 3 6 7l-4 3z" fill="#9c1414" />
        <text x="282" y="621" fill="#37b237">Y</text><text x="258" y="635" fill="#2323a8">Z</text><text x="258" y="663" fill="#c32929">X</text>
      </g>
    </svg>
  );
}

function NavTools() {
  return (
    <>
      <div className="absolute top-[7px] right-0 flex items-center gap-1.5">
        <button type="button" aria-label="Minimizar documento" className="h-1 w-[11px] border border-[#666] bg-white" />
        <button type="button" aria-label="Restaurar documento"><svg width="12" height="11" viewBox="0 0 12 11" fill="#fff" stroke="#555" aria-hidden="true"><path d="M2.500.5h8v7h-8zM.5 3.500h7v7h-7zM3 5.500h2v3H3z" /></svg></button>
        <button type="button" aria-label="Cerrar documento"><svg width="9" height="9" viewBox="0 0 9 9" fill="none" stroke="#555" aria-hidden="true"><path d="M1 1h2l2 2 2-2h2M1 8h2l2-2 2 2h2M1 1l3 3.500L1 8M9 1L6 4.500 9 8" /></svg></button>
      </div>
      <svg width="66" height="78" viewBox="1196 168 66 78" className="absolute top-[39px] right-[13px]" aria-label="ViewCube">
        <defs><radialGradient id="shade"><stop offset="0" stopColor="#aaa" /><stop offset="1" stopColor="#aaa" stopOpacity="0" /></radialGradient></defs>
        <ellipse cx="1229" cy="232" rx="30" ry="12" fill="url(#shade)" />
        <path d="M1201 185l28-13 29 13-29 14z" fill="#f4f4f4" stroke="#777" strokeWidth="1.200" />
        <path d="M1201 185l28 14v35l-25-13z" fill="#e9e9e9" stroke="#777" strokeWidth="1.200" />
        <path d="M1258 185l-29 14v35l26-14z" fill="#e3e3e3" stroke="#777" strokeWidth="1.200" />
        <g fontFamily="'Liberation Sans', sans-serif" fontSize="5" fontWeight="bold" fill="#888" textAnchor="middle">
          <text x="1215" y="212" transform="rotate(24 1215 212)">DERECHA</text>
          <text x="1243" y="213" transform="rotate(-24 1243 213)">POSTERIOR</text>
          <text x="1230" y="188" transform="rotate(-22 1230 188)">SUPERIOR</text>
        </g>
      </svg>
      <div className="absolute top-[119px] right-0 flex h-[186px] w-[30px] flex-col items-center rounded-l border-2 border-r-0 border-[#b5b5b5] bg-[#f5f5f5] text-[#888]">
        <svg width="28" height="182" viewBox="0 0 28 182" fill="none" stroke="#8a8a8a" aria-label="Barra de navegación">
          <circle cx="23" cy="5" r="3" /><path d="M21.500 3.500l3 3M24.500 3.500l-3 3" />
          <g transform="translate(-1 4)"><path d="M6 25c0-6 4-10 10-10h9v10c0 14-19 14-19 0z" fill="#fff" strokeWidth="1.300" /><circle cx="15.500" cy="25.500" r="6" strokeWidth="1.300" /></g>
          <path d="M12 49h6l-3 3zM12 107h6l-3 3zM12 139h6l-3 3z" fill="#777" stroke="none" /><path d="M3 56h22" stroke="#bbb" />
          <path d="M11 76l-4-5c0-2 2-1 3 1l-1-6c1-2 2 0 3 4l1-7c1-1 2 0 2 6l2-6c2 0 1 3 0 7l3-3c2 0-1 4-3 9z" fill="#fff" />
          <circle cx="13" cy="90" r="6" /><path d="M10 87h4l2 2v5h-6z" /><path d="M17 95l5 5" strokeWidth="3" />
          <ellipse cx="15" cy="124" rx="7" ry="3" /><ellipse cx="14" cy="124" rx="3" ry="7.500" /><path d="M10 123l2 1M19 121v5" strokeWidth="1.500" />
          <rect x="7.500" y="153.500" width="15" height="11" /><rect x="10.500" y="157.500" width="9" height="4" /><path d="M9 151l5-2M16 151h5" />
          <circle cx="23" cy="177" r="3" /><path d="M21.500 177l1.500 1.500 1.500-1.500" />
        </svg>
      </div>
    </>
  );
}

function Square({ label, tone = "plain", children }: { label: string; tone?: "plain" | "on" | "focus" | "off"; children: ReactNode }) {
  const tones = {
    plain: "border-[#7b7b7b] bg-gradient-to-b from-[#f6f6f6] to-[#d8d8d8]",
    on: "border-[#33658f] bg-gradient-to-b from-[#79add8] to-[#b7d7f1]",
    focus: "border-[#3f9cb8] bg-gradient-to-b from-[#eaf6fb] to-[#c7dde8]",
    off: "border-[#c4c4c4] bg-[#f4f4f4] opacity-70",
  };
  return (
    <button type="button" aria-label={label} className={`grid h-[23px] w-[23px] shrink-0 place-items-center rounded-[3px] border ${tones[tone]}`}>{children}</button>
  );
}

function Arrow() {
  return <svg width="12" height="15" viewBox="0 0 12 15" aria-hidden="true"><path d="M1.500 1v11l3-2.500 2 4.500 2-1-2-4.500H10z" fill="#fff" stroke="#333" /></svg>;
}

function Check({ id, label }: { id: string; label?: string }) {
  return (
    <span className="relative grid h-3 w-3 shrink-0">
      <input id={id} type="checkbox" defaultChecked aria-label={label} className="h-3 w-3 appearance-none border border-[#7f7f8c] bg-[#e4e8f2]" />
      <svg width="8" height="8" viewBox="0 0 8 8" className="pointer-events-none absolute top-0.5 left-0.5" fill="none" aria-hidden="true"><path d="M1 4l2 3 4-6" stroke="#3c3c78" strokeWidth="1.600" /></svg>
    </span>
  );
}

function BooleanIcon({ top, mid, bottom }: { top: string; mid: string; bottom: string }) {
  return (
    <svg width="17" height="17" viewBox="0 0 17 17" stroke="#222" strokeWidth="1.300" aria-hidden="true">
      <path d="M5 7.500H1v8h15v-8h-4V1.500H5z" fill={bottom} /><path d="M5 1.500h7v6H5z" fill={top} /><path d="M5 7.500h7v4H5z" fill={mid} />
    </svg>
  );
}

function Dialog() {
  return (
    <div role="dialog" aria-label="Barrido" className="absolute top-[213px] left-[45px] flex w-[346px] flex-col rounded-md border border-[#3b4653] bg-gradient-to-r from-[#c9dcef] via-[#a9cbef] to-[#bcd6ee] px-1.5 pb-1.5 font-['DejaVu_Sans_Condensed','DejaVu_Sans',sans-serif] text-[10px] text-[#222] shadow-[0_1px_10px_3px_rgba(0,0,0,0.5)]">
      <div className="flex h-[26px] items-start justify-between">
        <h1 className="pl-px leading-[26px]">Barrido</h1>
        <button type="button" aria-label="Cerrar" className="grid h-[18px] w-11 place-items-center rounded-b-[4px] border border-t-0 border-[#5c2823] bg-gradient-to-b from-[#dfa297] via-[#c0453a] to-[#cc6655]">
          <svg width="11" height="9" viewBox="0 0 11 9" stroke="#fff" strokeWidth="2.500" aria-hidden="true"><path d="M2 1l7 7M9 1L2 8" /></svg>
        </button>
      </div>
      <div className="border border-[#56687c] bg-[#f0f0f0] px-2 pt-[13px] pb-[3px]">
        <div className="flex gap-2.5">
          <div className="flex w-[81px] shrink-0 flex-col gap-[17px]">
            <div className="flex items-center gap-1.5"><Square label="Seleccionar perfil"><Arrow /></Square>Perfil</div>
            <div className="flex items-center gap-1.5"><Square label="Seleccionar ruta" tone="focus"><Arrow /></Square>Ruta</div>
            <div className="flex items-center gap-1.5"><Square label="Seleccionar sólidos" tone="off"><Arrow /></Square>Sólidos</div>
            <fieldset className="mt-3 flex w-[67px] gap-[3px] border border-[#dcdcdc] px-[7px] pt-[3px] pb-1.5">
              <legend className="px-px leading-3">Salida</legend>
              <Square label="Sólido" tone="on"><svg width="16" height="15" viewBox="0 0 16 15" stroke="#6b5410" aria-hidden="true"><path d="M1 5l4-4h10v8l-4 5H1z" fill="#e0a818" /><path d="M1 5h10v9H1z" fill="#fbd43c" /><path d="M1 5l4-4h10l-4 4z" fill="#fff0a0" /></svg></Square>
              <Square label="Superficie"><svg width="16" height="16" viewBox="0 0 16 16" stroke="#5b3a28" fill="none" aria-hidden="true"><path d="M1 5l4-4h10v9l-4 5H1z" fill="#f2b899" /><path d="M3.500 6.500h6v6h-6z" fill="#fff" /><path d="M1 5h10v10M11 5l4-4M5 1v6M9.500 10H15" /></svg></Square>
            </fieldset>
          </div>
          <div className="mt-0.5 flex h-[125px] w-10 shrink-0 flex-col items-center gap-1 border border-[#dedede] pt-[7px]">
            <Square label="Unión" tone="on"><BooleanIcon top="#3f6fae" mid="#4d7bb8" bottom="#6d93c4" /></Square>
            <Square label="Corte"><BooleanIcon top="#fff" mid="#fff" bottom="#6d93b4" /></Square>
            <Square label="Intersección"><BooleanIcon top="#fff" mid="#9bb0cc" bottom="#fff" /></Square>
            <span className="h-1" />
            <Square label="Nuevo sólido"><svg width="17" height="17" viewBox="0 0 17 17" stroke="#333" aria-hidden="true"><path d="M1 9l4-4h6v6l-3 5H1z" fill="#f5f5f5" /><path d="M1 9h7v7M8 9l3-4" fill="none" /><path d="M12 1v7M9 4.500h7M10 2l5 5M15 2l-5 5" stroke="#e07b28" /></svg></Square>
          </div>
          <fieldset className="-mt-1 flex w-[172px] flex-col border border-[#dcdcdc] px-[7px] pb-[18px]">
            <legend className="-ml-0.5 px-0.5 leading-3">Tipo</legend>
            <div className="relative mt-1">
              <select aria-label="Tipo" className="h-5 w-full appearance-none rounded-[2px] border border-[#777] bg-gradient-to-b from-[#f3f3f3] to-[#d4d4d4] pl-0.5 outline-none"><option>Camino</option></select>
              <svg width="7" height="4" viewBox="0 0 7 4" className="pointer-events-none absolute top-2 right-1" aria-hidden="true"><path d="M0 0h7L3.500 4z" fill="#111" /></svg>
            </div>
            <p className="mt-2 pl-0.5 leading-4">Orientación</p>
            <label className="mt-2 flex h-4 items-center pl-[11px]">
              <input type="radio" name="orient" defaultChecked className="h-3 w-3 appearance-none rounded-full border border-[#777] bg-white bg-[radial-gradient(circle,#1c4a6e_0%,#2b5f86_35%,#dce8f2_50%,#f7f7f7_100%)]" />
              <svg width="22" height="16" viewBox="0 0 22 16" className="mr-1.5 ml-[7px]" fill="none" aria-hidden="true"><path d="M3 5l7 3 7 5" stroke="#555" /><path d="M2 1v10M13 3L8 12M20 10l-6 5" stroke="#c8202a" strokeWidth="1.800" /></svg>
              Ruta
            </label>
            <label className="mt-[9px] flex h-4 items-center pl-[11px]">
              <input type="radio" name="orient" className="h-3 w-3 appearance-none rounded-full border border-[#999] bg-[#ededed]" />
              <svg width="22" height="16" viewBox="0 0 22 16" className="mr-1.5 ml-[7px]" fill="none" aria-hidden="true"><path d="M4 5l8 3 7 3" stroke="#555" /><path d="M4 1v9M12 3v10M19 6v9" stroke="#c8202a" strokeWidth="1.800" /></svg>
              Paralela
            </label>
            <label htmlFor="taper" className="mt-3 pl-0.5 leading-4">Inclinación</label>
            <div className="mt-2 ml-[3px] flex h-[19px] w-[92px]">
              <input id="taper" defaultValue="0" className="min-w-0 flex-1 bg-white px-1 outline-none" />
              <button type="button" aria-label="Opciones de inclinación" className="grid w-3.5 place-items-center border border-[#ddd] bg-[#eee]"><svg width="4" height="6" viewBox="0 0 4 6" aria-hidden="true"><path d="M0 0l4 3-4 3z" fill="#222" /></svg></button>
            </div>
          </fieldset>
        </div>
        <div className="mt-3 flex items-center gap-[3px]"><Check id="opt" /><label htmlFor="opt">Optimizar para selección única</label></div>
        <div className="mt-2 -ml-0.5 flex h-[22px] items-center">
          <button type="button" aria-label="Ayuda" className="grid h-5 w-[21px] place-items-center rounded-[2px] border border-[#777] bg-[#e8e8e8]"><Help /></button>
          <span className="ml-[46px] flex h-[22px] w-[58px] items-center gap-1 border border-[#e2e2e2] pl-1.5">
            <Check id="prev" label="Vista preliminar" />
            <svg width="27" height="13" viewBox="0 0 27 13" fill="none" stroke="#222" strokeWidth="1.500" aria-hidden="true"><path d="M2 5h7v5c-1 2-6 2-7 0zM13 5h7v4c0 3-6 3-7 0zM9 6c2-1 3-1 4 0M2 5c0-3 2-4 5-3M20 6l4-5 2 1" /></svg>
          </span>
          <button type="button" className="ml-1.5 h-5 w-[69px] rounded-[3px] border border-[#777] bg-gradient-to-b from-[#f4f4f4] to-[#d2d2d2]">Aceptar</button>
          <button type="button" className="relative ml-[5px] h-5 w-[69px] rounded-[3px] border border-[#33749a] bg-gradient-to-b from-[#e3f3fb] via-[#bcdff3] to-[#86bcdf]">
            Cancelar
            <svg width="14" height="20" viewBox="0 0 14 20" className="absolute top-0.5 left-[26px]" aria-hidden="true"><path d="M1.500 3v13l3-2.500 2.500 5.500 2.500-1L7 12.500h4z" fill="#fff" stroke="#111" /><rect x="0" y="0" width="4" height="4" fill="#d0242b" /></svg>
          </button>
        </div>
      </div>
    </div>
  );
}

export default function App() {
  return (
    <div className="relative flex min-h-screen overflow-hidden border-l border-black bg-white font-['Open_Sans','Noto_Sans',sans-serif] text-[11px] text-[#333]">
      <div className="flex min-w-0 flex-1 flex-col">
        <Header />
        <Ribbon />
        <main className="flex flex-1">
          <Browser />
          <div className="relative min-w-0 flex-1 bg-white"><Model /><NavTools /></div>
        </main>
        <footer className="flex h-[27px] items-center justify-end gap-[30px] border-t border-b-2 border-t-[#d5d5d5] border-b-[#333] bg-gradient-to-b from-white to-[#b5b5b5] pt-1 pr-[18px] text-black">
          <span>1</span><span>1</span>
        </footer>
      </div>
      <div className="flex w-1 shrink-0 flex-col border-r border-black bg-[#ddd]">
        <span className="h-[39px] bg-[#555]" /><span className="h-[89px] bg-white" /><span className="h-[15px] bg-[#eee]" /><span className="h-[18px] bg-[#999]" /><span className="flex-1 bg-gradient-to-b from-white via-[#ccc] to-white" /><span className="h-6 bg-[#222]" /><span className="h-14 bg-[#eee]" />
      </div>
      <Dialog />
      <p className="pointer-events-none absolute bottom-0.5 left-2.5 font-['Lato',sans-serif] text-[87px] leading-[84px] font-black whitespace-nowrap text-black/20">CADMECH3D.BLOGSPOT.COM</p>
    </div>
  );
}
